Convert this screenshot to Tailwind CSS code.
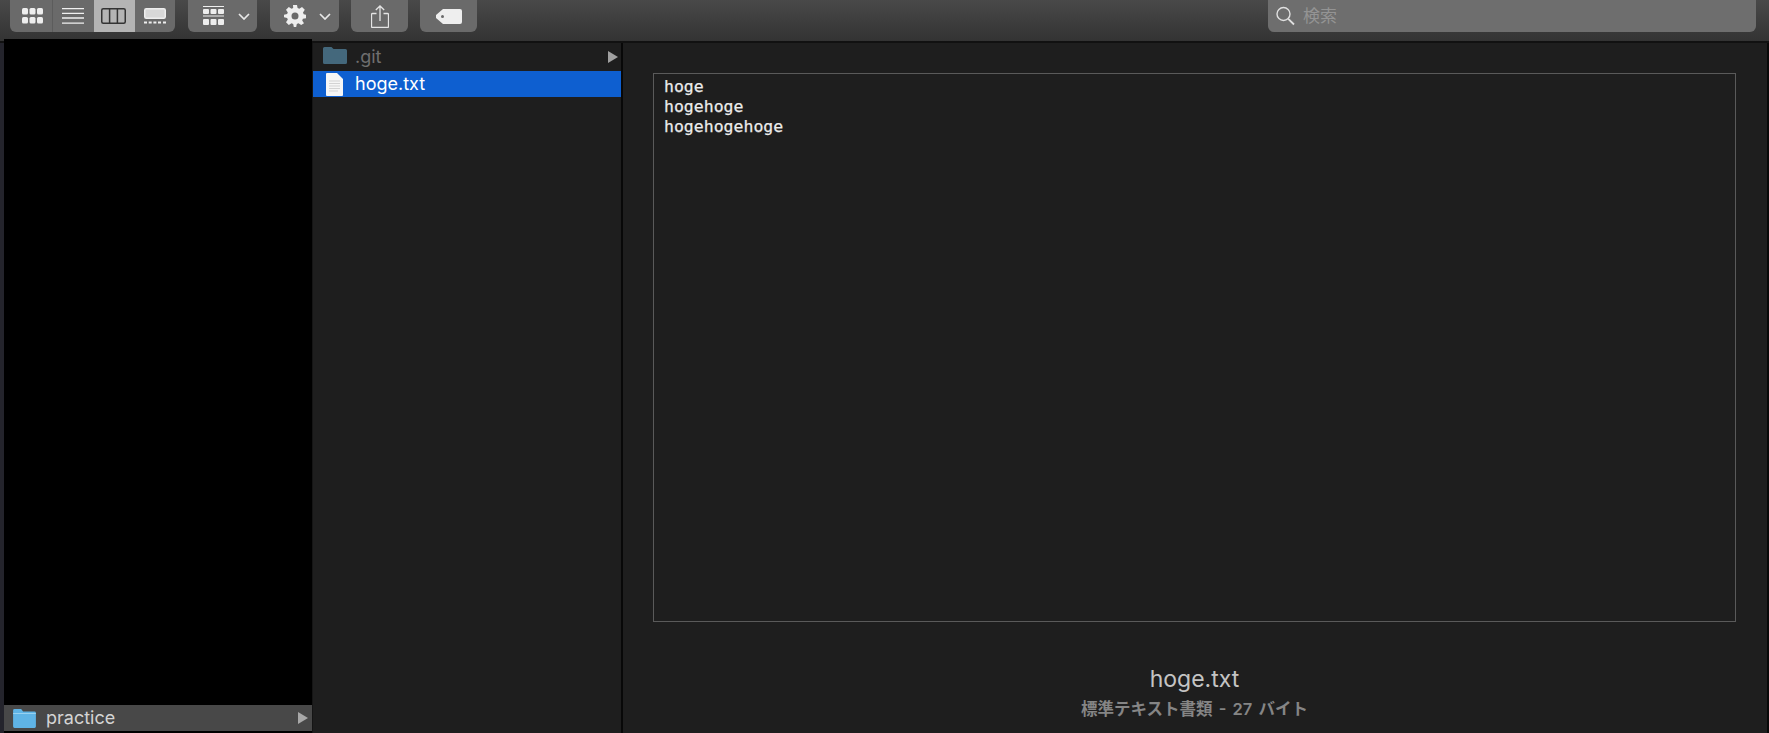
<!DOCTYPE html>
<html lang="ja">
<head>
  <meta charset="UTF-8" />
  <title>hoge.txt</title>
  <script src="https://cdn.jsdelivr.net/npm/@tailwindcss/browser@4"></script>
</head>
<body class="bg-[#1e1e1e] overflow-hidden font-['Inter','Noto_Sans_CJK_JP',sans-serif]">
  <div class="w-[1769px] h-[733px] flex flex-col">

    <!-- Toolbar -->
    <div class="h-[43px] shrink-0 flex items-start bg-gradient-to-b from-[#494949] to-[#333333] border-b-[2px] border-[#111111] pl-[10px] pr-[13px]">
      <!-- view switcher -->
      <div class="flex h-[32px] w-[165px] rounded-b-[6px] overflow-hidden bg-[#6a6a6a]">
        <div class="w-[43px] flex items-center justify-center border-r border-[#5c5c5c] pl-[2px]">
          <svg width="21" height="16" viewBox="0 0 21 16" fill="#eeeeee"><rect x="0" y="0" width="6" height="6.5" rx="1.5"/><rect x="7.5" y="0" width="6" height="6.5" rx="1.5"/><rect x="15" y="0" width="6" height="6.5" rx="1.5"/><rect x="0" y="9" width="6" height="6.5" rx="1.5"/><rect x="7.5" y="9" width="6" height="6.5" rx="1.5"/><rect x="15" y="9" width="6" height="6.5" rx="1.5"/></svg>
        </div>
        <div class="w-[41px] flex items-center justify-center pr-[2px]">
          <svg width="22" height="16" viewBox="0 0 22 16" stroke="#f0f0f0" stroke-width="1.3"><path d="M0 .7h22M0 5.300h22M0 10h22M0 15.200h22"/></svg>
        </div>
        <div class="w-[41px] flex items-center justify-center bg-[#b4b4b4] pr-[2px]">
          <svg width="25" height="16" viewBox="0 0 25 16" fill="none" stroke="#333333" stroke-width="1.5"><rect x=".75" y=".75" width="23.5" height="14.5" rx="1.5"/><path d="M8.600 1v14M16.400 1v14"/></svg>
        </div>
        <div class="w-[40px] flex items-center justify-center">
          <svg width="22" height="16" viewBox="0 0 22 16"><rect x=".75" y=".75" width="20.5" height="9.5" rx="1.5" fill="#d8d8d8" stroke="#eeeeee" stroke-width="1.5"/><path d="M0 14.500h3M4.700 14.500h3M9.400 14.500h3M14 14.500h3M19 14.500h3" stroke="#eeeeee" stroke-width="2"/></svg>
        </div>
      </div>

      <!-- arrange -->
      <div class="ml-[13px] flex items-center h-[32px] w-[69px] rounded-b-[6px] bg-[#6a6a6a] pl-[15px]">
        <svg width="21" height="20" viewBox="0 0 21 20" fill="#eeeeee"><path d="M0 .5h21M0 10h21" stroke="#eeeeee" stroke-width="1"/><rect x="0" y="3" width="6" height="5" rx="1"/><rect x="7.5" y="3" width="6" height="5" rx="1"/><rect x="15" y="3" width="6" height="5" rx="1"/><rect x="0" y="13" width="6" height="6" rx="1"/><rect x="7.5" y="13" width="6" height="6" rx="1"/><rect x="15" y="13" width="6" height="6" rx="1"/></svg>
        <svg class="ml-[14px]" width="12" height="7" viewBox="0 0 12 7" fill="none" stroke="#e8e8e8" stroke-width="1.7"><path d="M1 1l5 5 5-5"/></svg>
      </div>

      <!-- action -->
      <div class="ml-[13px] flex items-center h-[32px] w-[69px] rounded-b-[6px] bg-[#6a6a6a] pl-[14px]">
        <svg width="22" height="22" viewBox="0 0 22 22" fill="#eeeeee"><path fill-rule="evenodd" d="M9 0h4l.6 3.100 1.700.7L18 2l2.800 2.800-1.800 2.700.7 1.700L22 9.800v3.400l-3.100.6-.7 1.700 1.800 2.700L17.200 20.100l-2.700-1.800-1.700.7L12.200 22H9.800l-.6-3-1.700-.7-2.700 1.800L2 17.300l1.800-2.700-.7-1.700L0 12.300V9.700l3.100-.6.7-1.700L2 4.800 4.800 2l2.700 1.800 1.700-.7zM11 7.500a3.500 3.500 0 1 0 0 7 3.500 3.500 0 0 0 0-7z"/></svg>
        <svg class="ml-[13px]" width="12" height="7" viewBox="0 0 12 7" fill="none" stroke="#e8e8e8" stroke-width="1.7"><path d="M1 1l5 5 5-5"/></svg>
      </div>

      <!-- share -->
      <div class="ml-[12px] flex items-center justify-center h-[32px] w-[57px] rounded-b-[6px] bg-[#6a6a6a]">
        <svg width="18" height="23" viewBox="0 0 18 23" fill="none" stroke="#e4e4e4" stroke-width="1.3"><path d="M5.500 8.500H1.500a1 1 0 0 0-1 1v12a1 1 0 0 0 1 1h15a1 1 0 0 0 1-1v-12a1 1 0 0 0-1-1h-4"/><path d="M9 16V1M4.800 5L9 1l4.200 4"/></svg>
      </div>

      <!-- tag -->
      <div class="ml-[12px] flex items-center justify-center h-[32px] w-[57px] rounded-b-[6px] bg-[#6a6a6a]">
        <svg width="26" height="15" viewBox="0 0 26 15"><path fill="#eeeeee" fill-rule="evenodd" d="M7 0h17a2 2 0 0 1 2 2v11a2 2 0 0 1-2 2H7L0 9V6zM6.500 6a1.500 1.500 0 1 0 0 3 1.500 1.500 0 0 0 0-3z"/></svg>
      </div>

      <!-- search -->
      <div class="ml-auto flex items-center h-[32px] w-[488px] rounded-b-[6px] bg-[#6e6e6e] pl-[8px]">
        <svg width="19" height="20" viewBox="0 0 19 20" fill="none" stroke="#e0e0e0"><circle cx="7.500" cy="8" r="6.500" stroke-width="1.400"/><path d="M12.300 12.800L18 18.500" stroke-width="1.800"/></svg>
        <span class="ml-[8px] text-[17px] leading-none text-[#949494]">検索</span>
      </div>
    </div>

    <!-- Columns -->
    <div class="flex-1 flex min-h-0">
      <!-- sidebar -->
      <div class="w-[4px] bg-[#24242c]"></div>
      <div class="w-[308px] -mt-[4px] bg-black flex flex-col justify-end pb-[2px] relative">
        <div class="h-[26px] bg-[#484848] flex items-center pl-[9px] pr-[4px]">
          <svg width="23" height="19" viewBox="0 0 24 20"><path fill="#5fb4e6" d="M1.500 0h7l2 2.500h12A1.500 1.500 0 0 1 24 4v14.500a1.500 1.500 0 0 1-1.500 1.500h-21A1.500 1.500 0 0 1 0 18.500v-17A1.500 1.500 0 0 1 1.500 0z"/><path fill="#9bd4f2" d="M0 4.200h24v1H0z"/></svg>
          <span class="ml-[10px] text-[18px] leading-none text-[#d4d4d4]">practice</span>
          <svg class="ml-auto" width="10" height="12" viewBox="0 0 10 12" fill="#a8a8a8"><path d="M0 0l10 6-10 6z"/></svg>
        </div>
      </div>
      <div class="w-[1px] bg-[#151515]"></div>

      <!-- file list -->
      <div class="w-[308px]">
        <div class="h-[28px] flex items-center pl-[10px] pr-[3px]">
          <svg class="-mt-[3px]" width="24" height="17" viewBox="0 0 24 17"><path fill="#44687c" d="M1.500 0h7l2 2h12A1.500 1.500 0 0 1 24 3.500v12a1.500 1.500 0 0 1-1.500 1.500h-21A1.500 1.500 0 0 1 0 15.500v-14A1.500 1.500 0 0 1 1.500 0z"/></svg>
          <span class="ml-[8px] -mt-[1px] text-[18px] leading-none text-[#6f6f6f]">.git</span>
          <svg class="ml-auto -mt-[1px]" width="10" height="12" viewBox="0 0 10 12" fill="#a0a0a0"><path d="M0 0l10 6-10 6z"/></svg>
        </div>
        <div class="h-[26px] flex items-center pl-[13px] bg-[#0e5fd0]">
          <svg width="17" height="23" viewBox="0 0 17 23"><path fill="#f6f6f6" d="M1 0h10l6 6v16a1 1 0 0 1-1 1H1a1 1 0 0 1-1-1V1a1 1 0 0 1 1-1z"/><path stroke="#c4c4c4" stroke-width=".7" d="M3 8h11M3 10.500h11M3 13h11M3 15.500h11M3 18h9"/></svg>
          <span class="ml-[12px] text-[18px] leading-none text-white">hoge.txt</span>
        </div>
      </div>
      <div class="w-[2px] bg-[#080808]"></div>

      <!-- preview -->
      <div class="flex-1 flex flex-col pt-[30px] pl-[30px]">
        <div class="w-[1083px] h-[549px] shrink-0 border border-[#5a5a5a] pl-[10px] pt-[3px] font-['DejaVu_Sans_Mono',monospace] text-[16.5px] leading-[20px] text-[#ececec] [-webkit-text-stroke:0.25px_#ececec]">
          <div>hoge</div>
          <div>hogehoge</div>
          <div>hogehogehoge</div>
        </div>
        <div class="w-[1083px] mt-[42px] text-center text-[23px] leading-[30px] text-[#c4c4c4]">hoge.txt</div>
        <div class="w-[1083px] mt-[3px] text-center text-[16.5px] leading-[24px] font-semibold text-[#858585] [word-spacing:2px]">標準テキスト書類 - 27 バイト</div>
      </div>
      <div class="w-[2px] bg-[#080808]"></div>
    </div>
  </div>
</body>
</html>
